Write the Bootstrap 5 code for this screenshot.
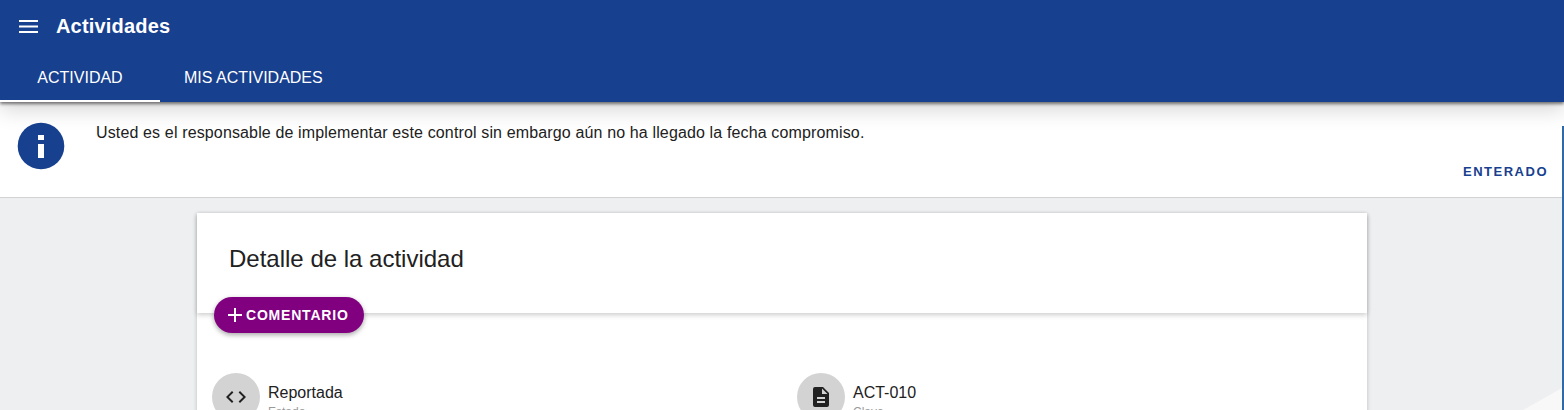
<!DOCTYPE html>
<html lang="es">
<head>
    <meta charset="UTF-8">
    <meta name="viewport" content="width=device-width, initial-scale=1.0">
    <title>Actividades</title>
    <link href="https://cdn.jsdelivr.net/npm/bootstrap@5.3.0/dist/css/bootstrap.min.css" rel="stylesheet">
    <style>
        html, body {
            height: 100%;
            overflow: hidden;
        }
        body {
            background: #eeeff1;
            font-family: "Liberation Sans", Arial, sans-serif;
            color: #212121;
        }
        .app-shell {
            height: 410px;
            overflow: hidden;
            position: relative;
        }
        .app-header {
            background: #17408f;
            color: #fff;
            height: 102px;
            box-shadow: 0 2px 3px rgba(0, 0, 0, .5), 0 8px 20px rgba(0, 0, 0, .16);
            position: relative;
            z-index: 3;
        }
        .top-row {
            height: 52px;
            padding-left: 19px;
            gap: 18px;
        }
        .app-title {
            font-size: 20px;
            font-weight: 700;
            line-height: 1;
            letter-spacing: .18px;
        }
        .tab-row {
            height: 50px;
        }
        .tab-item {
            color: #fff;
            text-decoration: none;
            font-size: 16px;
            height: 50px;
            padding-top: 3px;
            display: flex;
            align-items: center;
            justify-content: center;
        }
        .tab-on {
            width: 160px;
            border-bottom: 2px solid #fff;
        }
        .tab-off {
            padding: 3px 24px 2px;
        }
        .notice-bar {
            background: #fff;
            height: 96px;
            border-bottom: 1px solid #d2d2d2;
            padding: 20px 17px 0 17px;
            position: relative;
        }
        .notice-text {
            font-size: 16px;
            letter-spacing: .14px;
            line-height: 20px;
            margin-left: 31px;
            padding-top: 1px;
        }
        .notice-action {
            color: #17408f;
            font-size: 13px;
            font-weight: 700;
            letter-spacing: 1.5px;
            text-decoration: none;
            position: absolute;
            right: 16px;
            top: 60px;
        }
        .detail-card {
            width: 1170px;
            margin: 15px auto 0;
            background: #fff;
            box-shadow: 0 1px 4px rgba(0, 0, 0, .22);
            position: relative;
            z-index: 1;
            height: 300px;
        }
        .detail-head {
            height: 100px;
            padding: 30px 32px 0;
            box-shadow: 0 2px 5px rgba(0, 0, 0, .2);
            position: relative;
        }
        .detail-title {
            font-size: 24px;
            font-weight: 400;
            line-height: 32px;
            margin: 0;
            color: #212121;
        }
        .fab-comment {
            position: absolute;
            left: 17px;
            top: 84px;
            height: 36px;
            width: 150px;
            border: 0;
            border-radius: 18px;
            background: #800080;
            color: #fff;
            font-size: 14px;
            font-weight: 700;
            letter-spacing: .8px;
            box-shadow: 0 2px 5px rgba(0, 0, 0, .35);
            gap: 3px;
            padding: 0 0 0 13px;
        }
        .info-grid {
            padding-top: 60px;
        }
        .info-cell {
            gap: 8px;
            padding-left: 15px;
        }
        .avatar-dot {
            width: 48px;
            height: 48px;
            border-radius: 50%;
            background: #d3d3d3;
            flex: none;
        }
        .info-value {
            font-size: 16px;
            line-height: 24px;
            margin-top: 8px;
        }
        .info-label {
            font-size: 12px;
            line-height: 14px;
            color: #9a9a9a;
        }
        .edge-line {
            position: absolute;
            right: 0;
            top: 126px;
            bottom: 0;
            width: 2px;
            background: #2f6aa6;
            z-index: 2;
        }
        .corner-wedge {
            position: absolute;
            right: 2px;
            bottom: 0;
            width: 0;
            height: 0;
            border-style: solid;
            border-width: 0 0 22px 39px;
            border-color: transparent transparent #f8f8f9 transparent;
        }
    </style>
</head>
<body>
    <div class="app-shell">
        <header class="app-header">
            <div class="top-row d-flex align-items-center">
                <svg width="19" height="13" viewBox="0 0 19 13" class="flex-shrink-0"><path d="M0 0h19v2H0zM0 5.500h19v2H0zM0 11h19v2H0z" fill="#fff"/></svg>
                <span class="app-title">Actividades</span>
            </div>
            <nav class="tab-row d-flex">
                <a href="#" class="tab-item tab-on">ACTIVIDAD</a>
                <a href="#" class="tab-item tab-off">MIS ACTIVIDADES</a>
            </nav>
        </header>

        <section class="notice-bar d-flex align-items-start">
            <svg width="48" height="48" viewBox="0 0 48 48" class="flex-shrink-0"><circle cx="24" cy="24" r="23.300" fill="#17408f"/><rect x="21" y="13" width="6" height="5" fill="#fff"/><rect x="21" y="22" width="6" height="14" fill="#fff"/></svg>
            <p class="notice-text mb-0">Usted es el responsable de implementar este control sin embargo aún no ha llegado la fecha compromiso.</p>
            <a href="#" class="notice-action">ENTERADO</a>
        </section>

        <main class="detail-card">
            <div class="detail-head">
                <h2 class="detail-title">Detalle de la actividad</h2>
                <button class="fab-comment d-flex align-items-center" type="button">
                    <svg width="16" height="16" viewBox="0 0 16 16"><path d="M7 1h2v6h6v2H9v6H7V9H1V7h6z" fill="#fff"/></svg>
                    COMENTARIO
                </button>
            </div>
            <div class="info-grid row g-0">
                <div class="col-6 d-flex info-cell">
                    <div class="avatar-dot d-flex align-items-center justify-content-center">
                        <svg width="24" height="24" viewBox="0 0 24 24"><path d="M9.400 16.600 4.800 12l4.600-4.600L8 6l-6 6 6 6zM14.600 16.600 19.200 12l-4.600-4.600L16 6l6 6-6 6z" fill="#212121"/></svg>
                    </div>
                    <div>
                        <div class="info-value">Reportada</div>
                        <div class="info-label">Estado</div>
                    </div>
                </div>
                <div class="col-6 d-flex info-cell">
                    <div class="avatar-dot d-flex align-items-center justify-content-center">
                        <svg width="24" height="24" viewBox="0 0 24 24"><path d="M14 2H6a2 2 0 0 0-2 2v16a2 2 0 0 0 2 2h12a2 2 0 0 0 2-2V8zm2 16H8v-2h8zm0-4H8v-2h8zm-3-5V3.500L18.500 9z" fill="#212121"/></svg>
                    </div>
                    <div>
                        <div class="info-value">ACT-010</div>
                        <div class="info-label">Clave</div>
                    </div>
                </div>
            </div>
        </main>

        <div class="corner-wedge"></div>
        <div class="edge-line"></div>
    </div>

    <script src="https://cdn.jsdelivr.net/npm/bootstrap@5.3.0/dist/js/bootstrap.bundle.min.js"></script>
</body>
</html>
